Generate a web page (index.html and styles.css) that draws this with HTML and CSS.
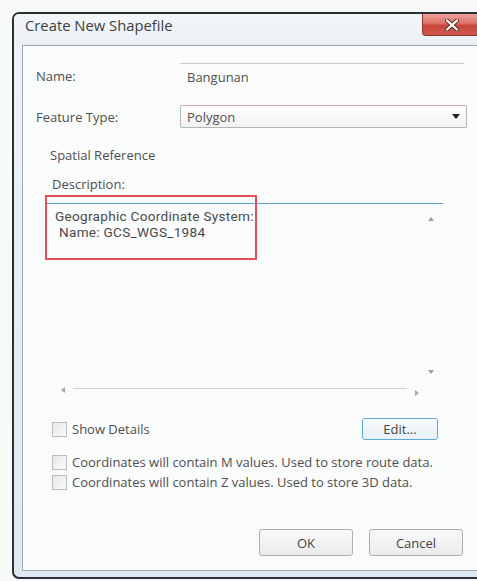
FILE: index.html
```html
<!DOCTYPE html>
<html lang="en">
<head>
<meta charset="utf-8">
<title>Create New Shapefile</title>
<link rel="stylesheet" href="styles.css">
</head>
<body>
<div class="window">
  <div class="titlebar">
    <span class="title">Create New Shapefile</span>
    <div class="close" aria-label="Close">
      <svg width="14" height="12" viewBox="0 0 14 12">
        <path d="M2 1.5 L12 10.5 M12 1.5 L2 10.5" stroke="#5a2a26" stroke-width="4" stroke-linecap="round"/>
        <path d="M2 1.5 L12 10.5 M12 1.5 L2 10.5" stroke="#ffffff" stroke-width="2.2" stroke-linecap="round"/>
      </svg>
    </div>
  </div>

  <div class="client">
    <div class="field-row">
      <span class="field-label">Name:</span>
      <div class="textbox">Bangunan</div>
    </div>
    <div class="field-row combo-row">
      <span class="field-label">Feature Type:</span>
      <div class="combo">
        <span>Polygon</span>
        <svg width="8" height="5" viewBox="0 0 8 5"><path d="M0 0 H8 L4 5 Z" fill="#222"/></svg>
      </div>
    </div>

    <div class="group">
      <div class="legend">Spatial Reference</div>
      <div class="desc-label">Description:</div>
      <div class="desc-box">
        <div class="desc-text">
          <div>Geographic Coordinate System:</div>
          <div class="indent">Name: GCS_WGS_1984</div>
        </div>
        <div class="vscroll">
          <span class="arrow up"></span>
          <span class="arrow down"></span>
        </div>
        <div class="hscroll">
          <span class="arrow left"></span>
          <span class="track"></span>
          <span class="arrow right"></span>
        </div>
        <div class="highlight"></div>
      </div>
      <div class="details-row">
        <label class="check"><span class="box"></span><span>Show Details</span></label>
        <button class="btn btn-focus edit">Edit...</button>
      </div>
    </div>

    <div class="options">
      <label class="check"><span class="box"></span><span>Coordinates will contain M values. Used to store route data.</span></label>
      <label class="check"><span class="box"></span><span>Coordinates will contain Z values. Used to store 3D data.</span></label>
    </div>

    <div class="actions">
      <button class="btn">OK</button>
      <button class="btn">Cancel</button>
    </div>
  </div>
</div>
</body>
</html>
```

FILE: styles.css
```css
html, body {
  margin: 0;
  padding: 0;
}

body {
  width: 477px;
  height: 581px;
  overflow: hidden;
  background: #f8f9f9;
  font-family: "Open Sans", "Noto Sans", sans-serif;
  font-size: 13px;
  color: #4f4f4f;
}

/* window frame */
.window {
  box-sizing: border-box;
  margin: 12px 0 0 12px;
  width: 500px;
  height: 567px;
  border: 2px solid #2d3033;
  border-right: none;
  border-radius: 7px 0 0 7px;
  background: linear-gradient(#eef3f7, #dde9f2);
  display: flex;
  flex-direction: column;
}

.titlebar {
  position: relative;
  height: 31px;
  flex: none;
  padding: 2px 0 0 11px;
  box-sizing: border-box;
  background: linear-gradient(#f3f6f9, #eaf0f5);
  border-radius: 5px 0 0 0;
}

.title {
  font-size: 14.8px;
  line-height: 19px;
  color: #3c3f42;
}

.close {
  position: absolute;
  top: 0;
  left: 408px;
  width: 62px;
  height: 22px;
  box-sizing: border-box;
  border: 1px solid #8e3128;
  border-top: none;
  border-radius: 0 0 0 4px;
  background: linear-gradient(#eba39c 0%, #dd7066 45%, #c8473c 55%, #d2594d 100%);
  display: flex;
  align-items: center;
  padding-left: 22px;
}

/* dialog body */
.client {
  flex: 1;
  margin: 0 0 6px 8px;
  border: 1px solid #a1a8ae;
  border-right: none;
  background: #fafbfb;
  padding: 17px 0 0 13px;
  display: flex;
  flex-direction: column;
}

.field-row {
  display: flex;
  align-items: center;
  height: 26px;
}

.combo-row {
  margin-top: 16px;
  height: 23px;
}

.field-label {
  width: 144px;
  flex: none;
}

.textbox {
  width: 284px;
  height: 26px;
  box-sizing: border-box;
  border-top: 1px solid #c9cdd0;
  display: flex;
  align-items: center;
  padding-left: 7px;
}

.combo {
  width: 287px;
  height: 23px;
  box-sizing: border-box;
  border: 1px solid #b3b6b9;
  border-top-color: #d8a9ab;
  border-radius: 2px;
  background: linear-gradient(#ffffff, #f1f2f3);
  display: flex;
  align-items: center;
  justify-content: space-between;
  padding: 0 6px 0 6px;
}

/* spatial reference group */
.group {
  margin-top: 19px;
  padding-left: 9px;
  display: flex;
  flex-direction: column;
}

.legend {
  padding-left: 5px;
  line-height: 16px;
}

.desc-label {
  padding-left: 7px;
  margin-top: 13px;
  line-height: 16px;
}

.desc-box {
  position: relative;
  margin-top: 11px;
  width: 398px;
  height: 195px;
  box-sizing: border-box;
  border-top: 1px solid #5aa2cf;
  display: grid;
  grid-template-columns: 1fr 22px;
  grid-template-rows: 1fr 16px;
}

.desc-text {
  padding: 4px 0 0 10px;
  font-family: Roboto, "Open Sans", sans-serif;
  font-size: 13.6px;
  line-height: 16px;
  letter-spacing: 0.28px;
  color: #4a4a4a;
}

.desc-text .indent {
  padding-left: 4px;
}

.vscroll {
  display: flex;
  flex-direction: column;
  justify-content: space-between;
  align-items: center;
  padding: 13px 3px 8px 0;
}

.hscroll {
  grid-column: 1 / 3;
  display: flex;
  align-items: center;
  padding: 0 24px 0 16px;
  gap: 8px;
}

.track {
  flex: 1;
  height: 1px;
  background: #cfd3d6;
  margin-top: -4px;
}

.arrow {
  width: 0;
  height: 0;
  border: 3px solid transparent;
}

.arrow.up { border-bottom: 4px solid #9a9d9f; border-top: none; }
.arrow.down { border-top: 4px solid #9a9d9f; border-bottom: none; }
.arrow.left { border-right: 4px solid #a7a9ab; border-left: none; }
.arrow.right { border-left: 4px solid #a7a9ab; border-right: none; margin-top: 6px; }

.highlight {
  position: absolute;
  left: 0;
  top: -9px;
  width: 212px;
  height: 65px;
  box-sizing: border-box;
  border: 2px solid #e04f5b;
  pointer-events: none;
}

.details-row {
  margin-top: 20px;
  width: 386px;
  padding-left: 7px;
  height: 22px;
  display: flex;
  align-items: center;
  justify-content: space-between;
}

/* check boxes */
.check {
  display: flex;
  align-items: center;
  gap: 5px;
}

.box {
  width: 15px;
  height: 15px;
  box-sizing: border-box;
  border: 1px solid #b9bcbf;
  background: linear-gradient(135deg, #e4e6e8, #fbfbfb);
  flex: none;
}

.options {
  margin-top: 12px;
  padding-left: 16px;
  display: flex;
  flex-direction: column;
}

.options .check {
  height: 20px;
}

/* push buttons */
.btn {
  font: inherit;
  color: #444;
  width: 94px;
  height: 27px;
  border: 1px solid #acafb2;
  border-radius: 3px;
  background: linear-gradient(#f9f9f9, #ebebeb);
  padding: 0;
}

.btn.edit {
  width: 76px;
  height: 22px;
}

.btn-focus {
  border-color: #5fa8d6;
  background: linear-gradient(#f6fafd, #e6f0f7);
}

.actions {
  margin-top: 37px;
  width: 427px;
  display: flex;
  justify-content: flex-end;
  gap: 16px;
}
```
